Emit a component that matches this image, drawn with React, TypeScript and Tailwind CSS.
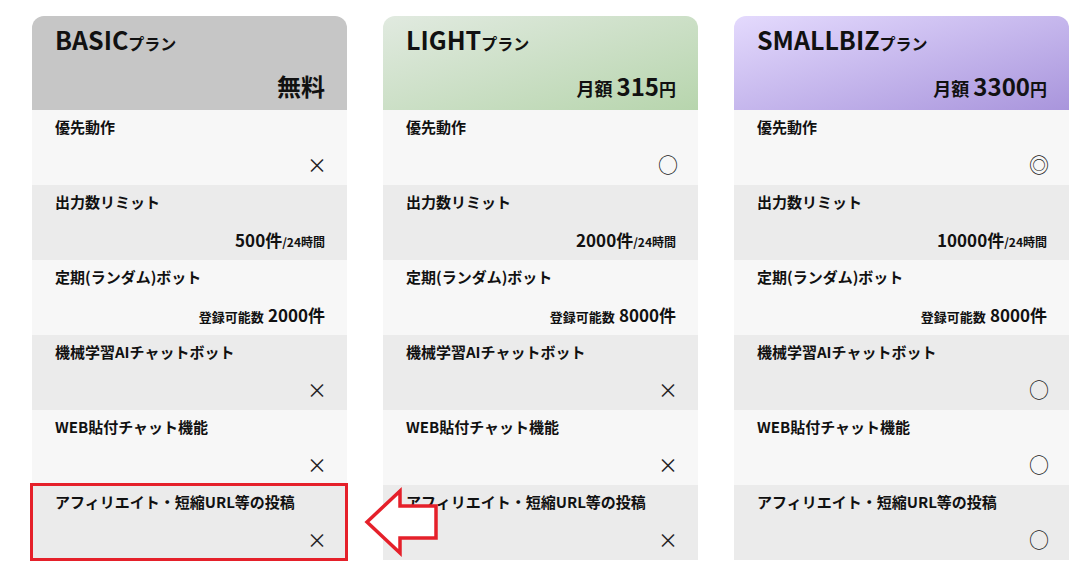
import React from 'react';

const font = { fontFamily: '"Noto Sans CJK JP", "Noto Sans", sans-serif' };

type Value = string | React.ReactNode;

const Count = ({ n }: { n: string }) => (
  <span className="font-bold text-[#111]">
    <span className="text-[17px]">{n}件</span>
    <span className="text-[12px]">/24時間</span>
  </span>
);

const Reg = ({ n }: { n: string }) => (
  <span className="font-bold text-[#111]">
    <span className="text-[13px] mr-[4px]">登録可能数</span>
    <span className="text-[17px]">{n}件</span>
  </span>
);

const Price = ({ amount }: { amount: string }) => (
  <span className="font-bold text-[#111]">
    <span className="text-[18px] mr-[4px]">月額</span>
    <span className="text-[24px]">{amount}</span>
    <span className="text-[17px]">円</span>
  </span>
);

const labels = [
  '優先動作',
  '出力数リミット',
  '定期(ランダム)ボット',
  '機械学習AIチャットボット',
  'WEB貼付チャット機能',
  'アフィリエイト・短縮URL等の投稿',
];

const plans: {
  name: string;
  width: string;
  head: string;
  price: React.ReactNode;
  values: Value[];
  boxed: boolean;
}[] = [
  {
    name: 'BASIC',
    width: 'w-[315px]',
    head: 'bg-[#c6c6c6]',
    price: <span className="text-[24px] font-bold text-[#111]">無料</span>,
    values: ['×', <Count n="500" />, <Reg n="2000" />, '×', '×', '×'],
    boxed: true,
  },
  {
    name: 'LIGHT',
    width: 'w-[315px]',
    head: 'bg-gradient-to-br from-[#e1eae0] to-[#b7d5ad]',
    price: <Price amount="315" />,
    values: ['○', <Count n="2000" />, <Reg n="8000" />, '×', '×', '×'],
    boxed: false,
  },
  {
    name: 'SMALLBIZ',
    width: 'w-[335px]',
    head: 'bg-gradient-to-br from-[#e4dafd] to-[#a995dc]',
    price: <Price amount="3300" />,
    values: ['◎', <Count n="10000" />, <Reg n="8000" />, '○', '○', '○'],
    boxed: false,
  },
];

const Card = ({ plan }: { plan: (typeof plans)[number] }) => (
  <div className={`${plan.width} shrink-0`}>
    <div className={`${plan.head} h-[94px] rounded-t-[12px] pl-[23px] pr-[22px] pt-[11px] pb-[12px] flex flex-col justify-between`}>
      <div className="text-[#111] font-bold leading-none">
        <span className="text-[25px]">{plan.name}</span>
        <span className="text-[16px]">プラン</span>
      </div>
      <div className="text-right leading-none">{plan.price}</div>
    </div>
    {labels.map((label, i) => {
      const v = plan.values[i];
      const isMark = typeof v === 'string';
      return (
        <div
          key={label}
          className={`relative h-[75px] pl-[23px] pr-[22px] flex flex-col justify-between ${isMark ? 'pb-[10px]' : 'pb-[12px]'} ${i % 2 === 0 ? 'bg-[#f7f7f7]' : 'bg-[#ebebeb]'}`}
        >
          <div className="pt-[7px] text-[15px] font-bold text-[#111] leading-[20px]">{label}</div>
          {isMark ? (
            <div className="text-right leading-none -mr-[2px] text-[20px] font-normal text-[#222]">{v}</div>
          ) : (
            <div className="text-right leading-none">{v}</div>
          )}
          {plan.boxed && i === labels.length - 1 && (
            <div className="absolute -left-[2px] -right-[1px] -top-[2px] -bottom-[1px] border-[3px] border-[#e5202a]" />
          )}
        </div>
      );
    })}
  </div>
);

export default function App() {
  return (
    <div className="relative w-[1083px] h-[569px] bg-white overflow-hidden" style={font}>
      <div className="flex gap-[36px] pl-[32px] pt-[16px]">
        {plans.map((p) => (
          <Card key={p.name} plan={p} />
        ))}
      </div>
      {/* arrow pointing at the boxed row */}
      <svg className="absolute left-[362px] top-[486px]" width="80" height="72" viewBox="0 0 80 72">
        <polygon
          points="5,36 38,5 38,20 74,20 74,52 38,52 38,67"
          fill="white"
          stroke="#e5202a"
          strokeWidth="3.5"
          strokeLinejoin="miter"
        />
      </svg>
    </div>
  );
}
